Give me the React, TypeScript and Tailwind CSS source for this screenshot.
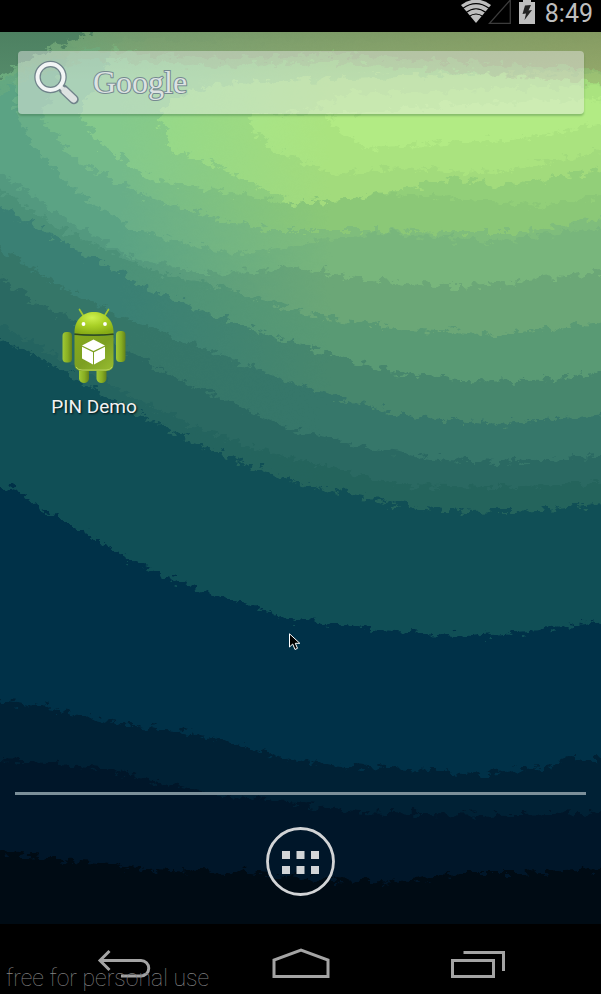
type Band = { left: string; right: string; d: string };

// Wallpaper bands, painted from the outermost (darkest) to the innermost.
const bands: Band[] = [
  { left: '#001629', right: '#001629', d: 'M-30 0V852L0 853L40 857L90 863L150 869L250 873L330 880L410 882L460 873L520 873L640 867V0Z' },
  { left: '#002135', right: '#002135', d: 'M-30 0V761H0L50 763L100 768L140 778L190 790L240 797L300 804L360 812L420 814L520 815L640 811V0Z' },
  { left: '#003148', right: '#003148', d: 'M-30 0V697L0 700L40 706L90 717L120 724L190 733L240 745L290 759L350 766L430 770L480 775L550 767L570 757L640 760V0Z' },
  { left: '#104f56', right: '#104f56', d: 'M-30 0V470L0 486L20 492L40 508L70 524L95 539L130 560L180 583L240 602L290 619L380 630L470 636L540 630L640 616V0Z' },
  { left: '#246460', right: '#24645c', d: 'M-30 0V325L0 340L23 350L50 364L96 390L145 417L190 440L250 466L300 483L350 494L410 507L470 512L540 510L640 499V0Z' },
  { left: '#2a6962', right: '#2a6962', d: 'M-30 0V305L0 325L50 352L110 385L180 420L250 447L340 470L400 485L500 487L640 480V0Z' },
  { left: '#357668', right: '#36776a', d: 'M-30 0V255L0 277L38 303L115 343L172 377L226 401L284 427L368 448L445 460L500 462L640 453V0Z' },
  { left: '#3a8074', right: '#47876d', d: 'M-30 0V225L0 248L46 278L115 314L190 343L268 374L349 401L406 416L500 424L640 411V0Z' },
  { left: '#4b9178', right: '#599a74', d: 'M-30 0V180L0 206L61 241L146 288L215 315L307 347L383 370L460 380L530 381L640 367V0Z' },
  { left: '#53997f', right: '#6ba777', d: 'M-30 0V164L0 190L58 227L153 271L219 286L307 314L406 329L498 335L640 317V0Z' },
  { left: '#5ba384', right: '#78b67c', d: 'M-30 0V145L0 173L61 217L134 258L215 275L291 267L368 280L460 287L640 268V0Z' },
  { left: '#68ae88', right: '#7fbd7c', d: 'M14 90L18 117L36 150L80 195L134 230L230 254L280 248L383 232L490 242L640 222V0H40Z' },
  { left: '#74ba8a', right: '#8bc877', d: 'M50 100L40 117L77 163L153 200L215 217L268 230L383 230L445 232L520 232L640 212V0H90Z' },
  { left: '#84c98c', right: '#92cf79', d: 'M92 90L80 117L102 145L153 180L215 190L280 203L383 193L460 199L540 206L640 190V40H120Z' },
  { left: '#93d88c', right: '#a2db7c', d: 'M176 96L158 117L172 150L230 172L291 203L345 200L383 192L460 178L500 186L640 163V72L400 76L215 84Z' },
  { left: '#a4e693', right: '#aae37f', d: 'M307 112L245 117L268 147L337 175L399 167L494 173L640 143V84L460 90L345 94Z' },
  { left: '#b5f098', right: '#b2eb84', d: 'M322 116L345 135L368 148L445 143L537 137L640 114V98L460 104Z' },
];

function Wallpaper() {
  return (
    <svg
      className="absolute inset-0 h-full w-full"
      viewBox="0 32 601 892"
      preserveAspectRatio="none"
      aria-hidden="true"
    >
      <defs>
        {bands.map((b, i) => (
          <linearGradient key={i} id={`band${i}`} gradientUnits="userSpaceOnUse" x1="0" y1="0" x2="601" y2="0">
            <stop offset="0.2" stopColor={b.left} />
            <stop offset="0.55" stopColor={b.right} />
          </linearGradient>
        ))}
        <linearGradient id="olive" gradientUnits="userSpaceOnUse" x1="0" y1="0" x2="601" y2="0">
          <stop offset="0" stopColor="#6eae7d" />
          <stop offset="0.25" stopColor="#85a676" />
          <stop offset="1" stopColor="#95a369" />
        </linearGradient>
        <linearGradient id="shade" gradientUnits="userSpaceOnUse" x1="0" y1="32" x2="0" y2="80">
          <stop offset="0" stopColor="#12321f" stopOpacity="0.12" />
          <stop offset="1" stopColor="#12321f" stopOpacity="0" />
        </linearGradient>
        <filter id="rough" filterUnits="userSpaceOnUse" x="-30" y="0" width="670" height="960" colorInterpolationFilters="sRGB">
          <feTurbulence type="fractalNoise" baseFrequency="0.1 0.16" numOctaves="4" seed="7" />
          <feDisplacementMap in="SourceGraphic" scale="18" xChannelSelector="R" yChannelSelector="G" />
        </filter>
      </defs>
      <rect x="0" y="32" width="601" height="892" fill="#000b14" />
      <g filter="url(#rough)">
        {bands.map((b, i) => (
          <path key={i} d={b.d} fill={`url(#band${i})`} />
        ))}
        <path d="M-30 100L0 92L40 72L90 60L220 66L330 62L640 86V0H-30Z" fill="url(#olive)" opacity="0.45" />
        <path d="M-30 84L0 80L40 64L90 48L130 52L220 60L330 54L640 72V0H-30Z" fill="url(#olive)" opacity="0.75" />
        <path d="M-30 84L0 76L35 55L100 28V0H-30Z" fill="#558b6a" />
      </g>
      <rect x="0" y="32" width="601" height="48" fill="url(#shade)" />
    </svg>
  );
}

function StatusBar() {
  return (
    <header className="flex h-8 items-start justify-end bg-black pr-2 text-[#bebebe]">
      <svg className="h-6 w-[30px]" viewBox="0 0 30 24" aria-label="Wi-Fi">
        <path d="M0 5Q15 -6 30 5L15 23Z" fill="currentColor" />
        <g fill="none" stroke="#000" strokeWidth="1.2">
          <path d="M2 8.200Q15 -1 28 8.200" />
          <path d="M5 12.500Q15 5 25 12.500" />
          <path d="M8 16.500Q15 11.500 22 16.500" />
        </g>
      </svg>
      <svg className="-ml-1 h-6 w-6" viewBox="0 0 24 24" aria-label="No signal">
        <path d="M2.500 23.300H23.300V0Z" fill="none" stroke="#3c3c3c" strokeWidth="1.300" />
      </svg>
      <svg className="ml-2 h-6 w-4" viewBox="0 0 16 24" aria-label="Charging">
        <path d="M4 0H12V2H16V24H0V2H4Z" fill="currentColor" />
        <path d="M6 5.500L12 5L9.500 10.500L13 10L5.500 20L7 13.500L3.500 14Z" fill="#222" />
      </svg>
      <time className="ml-2.5 text-[25px] leading-[27px]">8:49</time>
    </header>
  );
}

function SearchWidget() {
  return (
    <button
      type="button"
      className="flex h-[63px] w-full items-center gap-3.5 rounded-sm bg-[#eeeeee]/45 pl-4 text-left shadow-[0_2px_2px_rgba(40,90,50,0.3)]"
    >
      <svg className="h-[46px] w-[45px]" viewBox="0 0 45 46" aria-label="Search">
        <path d="M29 29L40 39.500" stroke="#70838a" strokeWidth="9.500" strokeLinecap="round" />
        <circle cx="16.500" cy="17" r="13" fill="none" stroke="#70838a" strokeWidth="6.500" />
        <path d="M25.500 26L29 29" stroke="#e4e8e8" strokeWidth="4" />
        <path d="M31 31L39.500 39" stroke="#dde2e1" strokeWidth="7" strokeLinecap="round" />
        <circle cx="16.500" cy="17" r="13" fill="none" stroke="#f2f5f5" strokeWidth="4" />
      </svg>
      <span className="pb-0.5 font-['Liberation_Serif',serif] text-[32px] leading-10 text-[#dce2e2] [-webkit-text-stroke:2px_#768990] [paint-order:stroke_fill]">
        Google
      </span>
    </button>
  );
}

function AndroidIcon() {
  return (
    <svg className="h-[76px] w-16" viewBox="0 0 64 76" aria-hidden="true">
      <defs>
        <radialGradient id="head" cx="0.45" cy="0.25" r="0.75">
          <stop offset="0" stopColor="#cdf04f" />
          <stop offset="0.5" stopColor="#a8cf25" />
          <stop offset="1" stopColor="#86ab16" />
        </radialGradient>
        <linearGradient id="torso" x1="0" y1="0" x2="1" y2="1">
          <stop offset="0" stopColor="#86aa1c" />
          <stop offset="0.5" stopColor="#7c9f22" />
          <stop offset="1" stopColor="#99bd31" />
        </linearGradient>
        <linearGradient id="limb" x1="0" y1="0" x2="1" y2="0">
          <stop offset="0" stopColor="#a0c936" />
          <stop offset="0.55" stopColor="#88ae22" />
          <stop offset="1" stopColor="#64821a" />
        </linearGradient>
      </defs>
      <path d="M17.500 1.500L21.500 8M46.500 1.500L42.500 8" stroke="#a0c52e" strokeWidth="1.700" strokeLinecap="round" />
      <path d="M17 58H27V71Q26 75 22 75Q18 75 17 71Z" fill="url(#limb)" />
      <path d="M34.500 58H44.500V71Q43.500 75 39.500 75Q35.500 75 34.500 71Z" fill="url(#limb)" />
      <rect x="0.500" y="24" width="9.500" height="30.500" rx="4" fill="url(#limb)" />
      <rect x="54" y="23" width="9.500" height="31" rx="4" fill="url(#limb)" />
      <path d="M12.500 25.500C12 12 21 4 32 4C43 4 52 12 51.500 25.500Q32 27.500 12.500 25.500Z" fill="url(#head)" />
      <path d="M12.500 27Q32 29 51.500 27V56Q51.500 63 44 63H20Q12.500 63 12.500 56Z" fill="url(#torso)" />
      <path d="M12.500 26.200Q32 28.200 51.500 26.200" fill="none" stroke="#36480c" strokeWidth="1.200" />
      <path d="M14 59Q16 62 20 62H44Q48 62 50 59" fill="none" stroke="#b5d35c" strokeWidth="1" />
      <circle cx="21.500" cy="16" r="1.900" fill="#fff" />
      <circle cx="43" cy="16" r="1.900" fill="#fff" />
      <path d="M31.500 31.500L43 37.500L31.500 43L20 37.500Z" fill="#fff" />
      <path d="M20 38.800L31 44.200V56.500L20 50.500Z" fill="#fff" />
      <path d="M43 38.800L32 44.200V56.500L43 50.500Z" fill="#fff" />
    </svg>
  );
}

function NavigationBar() {
  return (
    <nav className="relative grid h-[70px] grid-cols-3 bg-black px-[35px] pt-6 text-[#a4a4a4]">
      <button type="button" aria-label="Back" className="flex items-start justify-center">
        <svg className="h-[30px] w-[54px]" viewBox="0 0 54 30" fill="none" stroke="currentColor" strokeWidth="3">
          <path d="M12.500 3L3 12.500L12.500 22" />
          <path d="M3 12.500H44A7.700 7.700 0 0 1 44 28H24" />
        </svg>
      </button>
      <button type="button" aria-label="Home" className="flex items-start justify-center">
        <svg className="h-[30px] w-[58px]" viewBox="0 0 58 30" fill="none" stroke="currentColor" strokeWidth="3">
          <path d="M2 28.500V12L29 2L56 12V28.500Z" />
        </svg>
      </button>
      <button type="button" aria-label="Recent apps" className="flex items-start justify-center">
        <svg className="h-[30px] w-[54px]" viewBox="0 0 54 30" fill="none" stroke="currentColor" strokeWidth="3">
          <path d="M1.500 12.500H42.500V28.500H1.500Z" />
          <path d="M12.500 4.500H52.500V23" />
        </svg>
      </button>
      <p className="pointer-events-none absolute bottom-0 left-1.5 text-[23px] leading-[30px] font-thin text-[#858585]">
        free for personal use
      </p>
    </nav>
  );
}

export default function App() {
  return (
    <div className="flex min-h-screen flex-col bg-black font-['Roboto',sans-serif]">
      <StatusBar />
      <main className="relative flex flex-1 flex-col">
        <Wallpaper />
        <div className="relative flex flex-1 flex-col">
          <div className="pt-[19px] pr-[17px] pl-[18px]">
            <SearchWidget />
          </div>
          <div className="mt-[194px] px-11">
            <button type="button" className="flex w-[100px] flex-col items-center gap-[11px]">
              <AndroidIcon />
              <span className="text-[19px] leading-6 text-[#f2f2f2] [text-shadow:1px_1px_2px_rgba(0,0,0,0.8)]">PIN Demo</span>
            </button>
          </div>
          <footer className="mt-auto px-[15px] pb-7">
            <hr className="h-[3px] border-0 bg-[#7b8f99]" />
            <button type="button" aria-label="All apps" className="mx-auto mt-8 block h-[69px] w-[69px]">
              <svg className="h-full w-full" viewBox="0 0 69 69" aria-hidden="true">
                <circle cx="34.500" cy="34.500" r="33" fill="none" stroke="#d2d4d6" strokeWidth="2.800" />
                <g fill="#d2d4d6">
                  <path d="M16 24h8v8h-8zM30.500 24h8v8h-8zM45 24h8v8h-8z" />
                  <path d="M16 39h8v8h-8zM30.500 39h8v8h-8zM45 39h8v8h-8z" />
                </g>
              </svg>
            </button>
          </footer>
        </div>
        <svg className="absolute top-[601px] left-[289px] h-[18px] w-3" viewBox="0 0 12 18" aria-hidden="true">
          <path d="M0.500 0.800V14L3.700 11L6 16.500L8.500 15.300L6.300 10.300H10.800Z" fill="#000" stroke="#fff" strokeWidth="1" />
        </svg>
      </main>
      <NavigationBar />
    </div>
  );
}
